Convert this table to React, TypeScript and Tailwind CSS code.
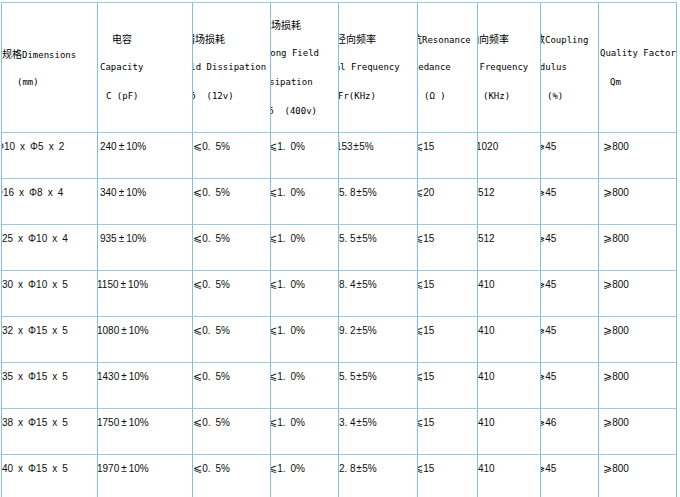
import React from "react";

type Line = { text: string; ml: string };

const headers: Line[][] = [
    [
        { text: "规格Dimensions", ml: "ml-0" },
        { text: "(mm)", ml: "ml-[15px]" },
    ],
    [
        { text: "电容", ml: "ml-[14px]" },
        { text: "Capacity", ml: "ml-[2px]" },
        { text: "C (pF)", ml: "ml-[8px]" },
    ],
    [
        { text: "弱场损耗", ml: "-ml-[8px]" },
        { text: "Weak Field Dissipation", ml: "-ml-[46px]" },
        { text: "tanδ\u00a0\u00a0(12v)", ml: "-ml-[19px]" },
    ],
    [
        { text: "强场损耗", ml: "-ml-[10px]" },
        { text: "Strong Field", ml: "-ml-[17px]" },
        { text: "Dissipation", ml: "-ml-[18px]" },
        { text: "tanδ\u00a0\u00a0(400v)", ml: "-ml-[19px]" },
    ],
    [
        { text: "径向频率", ml: "-ml-[3px]" },
        { text: "Radial Frequency", ml: "-ml-[26px]" },
        { text: "Fr(KHz)", ml: "-ml-[1px]" },
    ],
    [
        { text: "谐振阻抗Resonance", ml: "-ml-[36px]" },
        { text: "Impedance", ml: "-ml-[16px]" },
        { text: "(Ω\u00a0)", ml: "ml-[6px]" },
    ],
    [
        { text: "轴向频率", ml: "-ml-[9px]" },
        { text: "Axial Frequency", ml: "-ml-[31px]" },
        { text: "(KHz)", ml: "ml-[5px]" },
    ],
    [
        { text: "耦合系数Coupling", ml: "-ml-[36px]" },
        { text: "Modulus", ml: "-ml-[12px]" },
        { text: "(%)", ml: "ml-[6px]" },
    ],
    [
        { text: "Quality Factor", ml: "ml-[1px]" },
        { text: "Qm", ml: "ml-[11px]" },
    ],
];

const sp = "\u2002";

// each row: [text, margin class] per column
const rows: [string, string][][] = [
    [[`Φ10${sp}x${sp}Φ5${sp}x${sp}2`, "-ml-[6px]"], ["240±10%", "ml-[2px]"], [`⩽0.${sp}5%`, "ml-0"], [`⩽1.${sp}0%`, "-ml-[3px]"], ["153±5%", "-ml-[3px]"], ["⩽15", "-ml-[4px]"], ["1020", "-ml-[2px]"], ["⩾45", "-ml-[5px]"], ["⩾800", "ml-[4px]"]],
    [[`Φ16${sp}x${sp}Φ8${sp}x${sp}4`, "-ml-[7px]"], ["340±10%", "ml-[2px]"], [`⩽0.${sp}5%`, "ml-0"], [`⩽1.${sp}0%`, "-ml-[3px]"], ["5. 8±5%", "ml-0"], ["⩽20", "-ml-[4px]"], ["512", "ml-0"], ["⩾45", "-ml-[5px]"], ["⩾800", "ml-[4px]"]],
    [[`Φ25${sp}x${sp}Φ10${sp}x${sp}4`, "-ml-[8px]"], ["935±10%", "ml-[2px]"], [`⩽0.${sp}5%`, "ml-0"], [`⩽1.${sp}0%`, "-ml-[3px]"], ["5. 5±5%", "ml-0"], ["⩽15", "-ml-[4px]"], ["512", "ml-0"], ["⩾45", "-ml-[5px]"], ["⩾800", "ml-[4px]"]],
    [[`Φ30${sp}x${sp}Φ10${sp}x${sp}5`, "-ml-[8px]"], ["1150±10%", "-ml-[1px]"], [`⩽0.${sp}5%`, "ml-0"], [`⩽1.${sp}0%`, "-ml-[3px]"], ["8. 4±5%", "ml-0"], ["⩽15", "-ml-[4px]"], ["410", "ml-0"], ["⩾45", "-ml-[5px]"], ["⩾800", "ml-[4px]"]],
    [[`Φ32${sp}x${sp}Φ15${sp}x${sp}5`, "-ml-[8px]"], ["1080±10%", "-ml-[1px]"], [`⩽0.${sp}5%`, "ml-0"], [`⩽1.${sp}0%`, "-ml-[3px]"], ["9. 2±5%", "ml-0"], ["⩽15", "-ml-[4px]"], ["410", "ml-0"], ["⩾45", "-ml-[5px]"], ["⩾800", "ml-[4px]"]],
    [[`Φ35${sp}x${sp}Φ15${sp}x${sp}5`, "-ml-[8px]"], ["1430±10%", "-ml-[1px]"], [`⩽0.${sp}5%`, "ml-0"], [`⩽1.${sp}0%`, "-ml-[3px]"], ["5. 5±5%", "ml-0"], ["⩽15", "-ml-[4px]"], ["410", "ml-0"], ["⩾45", "-ml-[5px]"], ["⩾800", "ml-[4px]"]],
    [[`Φ38${sp}x${sp}Φ15${sp}x${sp}5`, "-ml-[8px]"], ["1750±10%", "-ml-[1px]"], [`⩽0.${sp}5%`, "ml-0"], [`⩽1.${sp}0%`, "-ml-[3px]"], ["3. 4±5%", "ml-0"], ["⩽15", "-ml-[4px]"], ["410", "ml-0"], ["⩾46", "-ml-[5px]"], ["⩾800", "ml-[4px]"]],
    [[`Φ40${sp}x${sp}Φ15${sp}x${sp}5`, "-ml-[8px]"], ["1970±10%", "-ml-[1px]"], [`⩽0.${sp}5%`, "ml-0"], [`⩽1.${sp}0%`, "-ml-[3px]"], ["2. 8±5%", "ml-0"], ["⩽15", "-ml-[4px]"], ["410", "ml-0"], ["⩾45", "-ml-[5px]"], ["⩾800", "ml-[4px]"]],
];

const cellBorder = "border-r border-b border-r-[#7fc3e2] border-b-[#9ccbe0] overflow-hidden";

// split chinese runs out so they can get a larger cjk face
function HeaderText({ text }: { text: string }) {
    const parts = text.split(/([\u4e00-\u9fff]+)/).filter((p) => p !== "");
    return (
        <>
            {parts.map((p, i) =>
                /[\u4e00-\u9fff]/.test(p) ? (
                    <span key={i} className="font-['Noto_Sans_CJK_SC',sans-serif] text-[10px]">
                        {p}
                    </span>
                ) : (
                    <span key={i}>{p}</span>
                )
            )}
        </>
    );
}

function DataText({ text, col }: { text: string; col: number }) {
    const parts = text.split(/([±⩽⩾])/).filter((p) => p !== "");
    return (
        <>
            {parts.map((p, i) => {
                if (p === "±") {
                    return (
                        <span key={i} className={col === 1 ? "mx-[2px]" : "mx-[0.5px]"}>
                            ±
                        </span>
                    );
                }
                if (p === "⩽" || p === "⩾") {
                    return (
                        <span key={i} className="text-[11px] font-['DejaVu_Sans',sans-serif]">
                            {p}
                        </span>
                    );
                }
                return <span key={i}>{p}</span>;
            })}
        </>
    );
}

export default function App() {
    return (
        <div className="w-[680px] h-[497px] overflow-hidden bg-white">
            <div className="ml-[1px] mt-[2px] w-fit border-l border-t border-l-[#7fc3e2] border-t-[#9ccbe0]">
                <div className="grid grid-cols-[96px_95px_78px_68px_79px_60px_63px_58px_78px]">
                    {headers.map((lines, c) => (
                        <div key={c} className={`${cellBorder} h-[130px] flex flex-col justify-center text-[9px] text-black font-['DejaVu_Sans_Mono','Noto_Sans_CJK_SC',monospace]`}>
                            {lines.map((l, i) => (
                                <div key={i} className={`${l.ml} h-[29px] leading-[29px] whitespace-nowrap`}>
                                    <HeaderText text={l.text} />
                                </div>
                            ))}
                        </div>
                    ))}
                    {rows.map((row, r) =>
                        row.map(([text, ml], c) => (
                            <div key={`${r}-${c}`} className={`${cellBorder} h-[46px] pt-[8px] text-[10px] leading-[12px] text-[#0d0d0d] font-['Liberation_Sans','DejaVu_Sans','Noto_Sans_CJK_SC',sans-serif]`}>
                                <div className={`${ml} whitespace-nowrap`}>
                                    <DataText text={text} col={c} />
                                </div>
                            </div>
                        ))
                    )}
                </div>
            </div>
        </div>
    );
}
